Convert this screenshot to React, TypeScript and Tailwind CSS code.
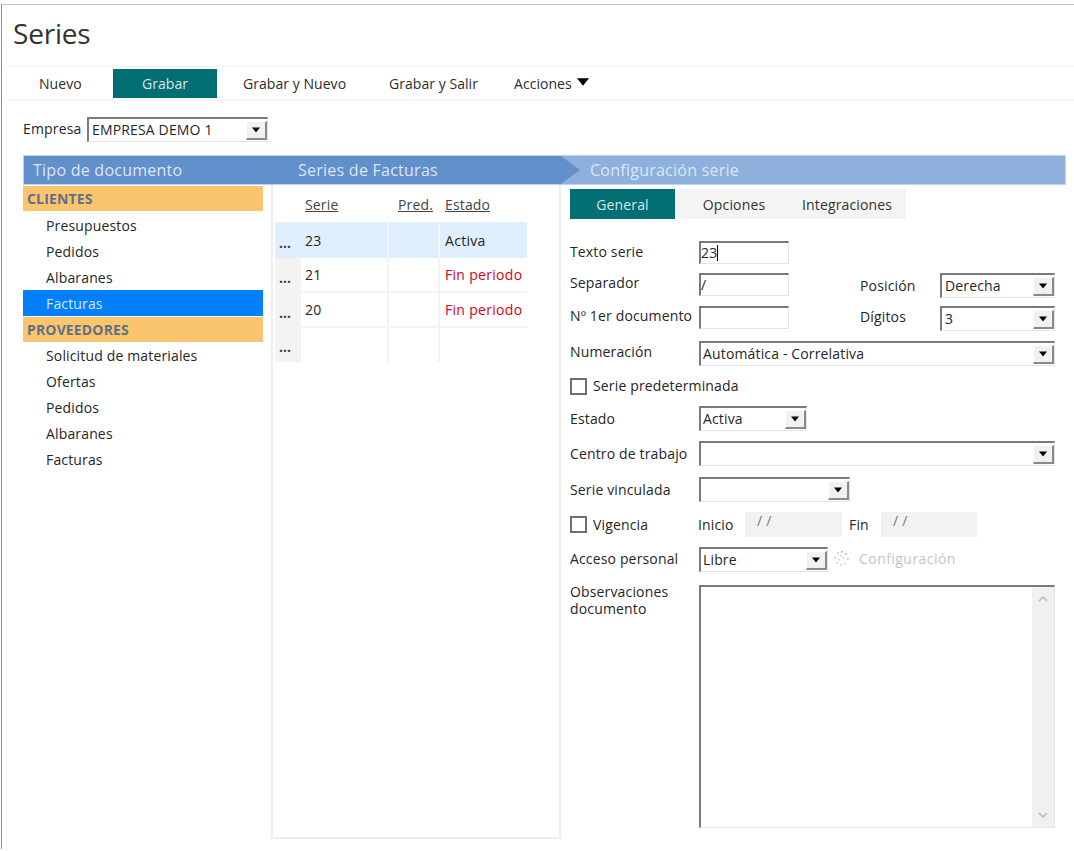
const inset = "border-t-2 border-l-2 border-t-[#7a7a7a] border-l-[#7a7a7a] border-r border-b border-r-[#e4e4e4] border-b-[#e4e4e4] bg-white";

function Arrow() {
  return (
    <svg width="8" height="6" viewBox="0 0 8 6" className="block">
      <path d="M0 0.5H8L4 5.5Z" fill="#000" />
    </svg>
  );
}

function Select({ value, className, tight }: { value?: string; className: string; tight?: boolean }) {
  return (
    <div className={`${inset} flex items-center justify-between h-[25px] border-r-[#9a9a9a] border-b-[#dcdcdc] ${className}`}>
      <span className={`${tight ? "pl-[2px]" : "pl-[3px]"} leading-none`}>{value}</span>
      <span className="w-[21px] h-[19px] bg-[#f1f1f1] flex items-center justify-center border-r-2 border-b-2 border-r-[#8a8a8a] border-b-[#8a8a8a] border-t border-l border-t-white border-l-white">
        <Arrow />
      </span>
    </div>
  );
}

function TextBox({ value, caret }: { value?: string; caret?: boolean }) {
  return (
    <div className={`${inset} w-[90px] h-[23px] flex items-center leading-none`}>
      {value}
      {caret && <span className="w-px h-[16px] bg-black" />}
    </div>
  );
}

function Check() {
  return <span className="block w-[17px] h-[17px] border-2 border-[#6f6f6f] bg-white shrink-0" />;
}

function Label({ children, className = "" }: { children: React.ReactNode; className?: string }) {
  return <span className={`w-[129px] shrink-0 whitespace-nowrap ${className}`}>{children}</span>;
}

function Spinner() {
  const dots = [
    [9, 2, "#8fb0de"], [13, 4, "#b5b5b5"], [15, 9, "#9fb8dc"], [12, 14, "#cfcfcf"],
    [8, 15, "#b4cbea"], [4, 13, "#c9c9c9"], [2, 8, "#a6c1e6"], [5, 3, "#c4c4c4"],
    [8, 6, "#c8c8c8"], [11, 8, "#b9cde8"], [6, 10, "#cfcfcf"],
  ] as const;
  return (
    <svg width="18" height="18" viewBox="0 0 18 18" className="shrink-0">
      {dots.map(([x, y, c], i) => (
        <rect key={i} x={x} y={y} width="1.6" height="1.6" fill={c} />
      ))}
    </svg>
  );
}

const clientes = ["Presupuestos", "Pedidos", "Albaranes", "Facturas"];
const proveedores = ["Solicitud de materiales", "Ofertas", "Pedidos", "Albaranes", "Facturas"];

const rows = [
  { serie: "23", estado: "Activa", h: "h-[36px]", sel: true },
  { serie: "21", estado: "Fin periodo", h: "h-[35px]", red: true, line: true },
  { serie: "20", estado: "Fin periodo", h: "h-[35px]", red: true, line: true },
  { serie: "", estado: "", h: "h-[34px]" },
];

function Row({ r }: { r: (typeof rows)[number] }) {
  const cell = `flex items-center h-full border-r-2 ${r.sel ? "border-r-[#eef6fe]" : "border-r-[#f4f4f4]"}`;
  return (
    <div className={`flex ${r.h} ${r.sel ? "bg-[#e0effd]" : ""}`}>
      <div className={`w-[26px] h-full flex items-end pl-[4px] pb-[7px] leading-[16px] font-bold text-[14px] tracking-normal text-[#4a3a40] ${r.sel ? "" : "bg-[#f3f3f3]"}`}>...</div>
      <div className={`${cell} w-[88px] pl-[4px] ${r.line ? "border-b-2 border-b-[#f5f5f5]" : ""}`}>{r.serie}</div>
      <div className={`${cell} w-[51px] ${r.line ? "border-b-2 border-b-[#f5f5f5]" : ""}`} />
      <div className={`flex-1 flex items-center pl-[5px] whitespace-nowrap tracking-[0.3px] ${r.red ? "text-[#d8001c]" : ""} ${r.line ? "border-b-2 border-b-[#f5f5f5]" : ""}`}>{r.estado}</div>
    </div>
  );
}

export default function App() {
  return (
    <div className="w-[1074px] h-[851px] overflow-hidden bg-white pt-[4px] pl-px text-[14px] text-[#262626] font-['Open_Sans','Noto_Sans',sans-serif] tracking-[0.15px]">
      <div className="h-[845px] border-t border-l border-t-[#c4c4c4] border-l-[#8f8f8f]">
        <div className="h-[60px] pl-[11px] pt-[9px] text-[28px] leading-[38px] tracking-[-0.2px] text-[#333]">Series</div>

        <div className="ml-[5px] h-[36px] border-y-2 border-[#f6f6f6] flex items-center text-[#2c2c2c] tracking-[0.05px]">
          <div className="w-[106px] pl-[32px]">Nuevo</div>
          <div className="w-[104px] h-[29px] bg-[#016e73] text-[#d9e6e6] flex items-center justify-center">Grabar</div>
          <div className="w-[172px] pl-[26px]">Grabar y Nuevo</div>
          <div className="w-[125px]">Grabar y Salir</div>
          <div className="flex items-center gap-[6px]">Acciones <span className="mb-[3px] scale-150 ml-[1px]"><Arrow /></span></div>
        </div>

        <div className="flex items-center pl-[21px] mt-[16px] h-[25px]">
          <span className="w-[64px] -mt-[2px]">Empresa</span>
          <Select value="EMPRESA DEMO 1" className="w-[181px]" />
        </div>

        <div className="flex ml-[21px] mt-[13px] w-[1043px] h-[30px] border border-[#bcd4f0] text-[16px] text-[#dbe6f5] tracking-[0.25px] bg-[#8fafdd]">
          <div className="w-[537px] bg-[#6290cb] flex items-center">
            <span className="w-[274px] pl-[9px]">Tipo de documento</span>
            <span>Series de Facturas</span>
          </div>
          <svg width="20" height="28" viewBox="0 0 20 28" className="shrink-0 block">
            <path d="M0 0L19 14L0 28Z" fill="#6290cb" />
          </svg>
          <div className="flex items-center pl-[9px]">Configuración serie</div>
        </div>

        <div className="flex ml-[21px]">
          <div className="w-[240px] shrink-0 mt-[1px]">
            <div className="h-[25px] bg-[#fbc56e] flex items-center pl-[4px] font-bold text-[#5f6f8a] border-b border-[#fbc56e]">CLIENTES</div>
            <div className="pt-[1px]">
              {clientes.map((c) => (
                <div key={c} className={`h-[26px] flex items-center pl-[23px] ${c === "Facturas" ? "bg-[#007fff] text-[#d5e9ff]" : ""}`}>{c}</div>
              ))}
            </div>
            <div className="h-[25px] mt-[1px] bg-[#fbc56e] flex items-center pl-[4px] font-bold text-[#5f6f8a]">PROVEEDORES</div>
            <div>
              {proveedores.map((c, i) => (
                <div key={i} className="h-[26px] flex items-center pl-[23px]">{c}</div>
              ))}
            </div>
          </div>

          <div className="ml-[8px] w-[290px] h-[654px] shrink-0 border-x-2 border-b-2 border-[#eeeeee] pl-[2px]">
            <div className="h-[37px] pt-[2px] flex items-center underline text-[#444]">
              <span className="ml-[30px] w-[93px]">Serie</span>
              <span className="w-[47px]">Pred.</span>
              <span>Estado</span>
            </div>
            <div className="w-[252px]">
              {rows.map((r, i) => <Row key={i} r={r} />)}
            </div>
          </div>

          <div className="ml-[9px] pt-[4px] flex-1">
            <div className="flex w-[336px] h-[30px] bg-[#f4f4f4] text-[#333]">
              <div className="w-[105px] bg-[#016e73] text-[#d9e6e6] flex items-center justify-center">General</div>
              <div className="w-[118px] flex items-center justify-center">Opciones</div>
              <div className="flex items-center pl-[9px]">Integraciones</div>
            </div>

            <div className="flex items-center h-[23px] mt-[22px]"><Label className="-mt-[2px]">Texto serie</Label><TextBox value="23" caret /></div>

            <div className="flex h-[25px] mt-[9px]">
              <div className="flex items-center h-[23px]"><Label className="-mt-[4px]">Separador</Label><TextBox value="/" /></div>
              <span className="ml-[71px] w-[80px] self-center">Posición</span>
              <Select value="Derecha" className="w-[115px]" />
            </div>

            <div className="flex h-[25px] mt-[8px]">
              <div className="flex items-center h-[23px]"><Label className="-mt-[4px]">Nº 1er documento</Label><TextBox /></div>
              <span className="ml-[71px] w-[80px] self-center -mt-[4px]">Dígitos</span>
              <Select value="3" className="w-[115px]" />
            </div>

            <div className="flex items-center h-[25px] mt-[10px]">
              <Label className="-mt-[4px]">Numeración</Label>
              <Select tight value="Automática - Correlativa" className="w-[356px]" />
            </div>

            <div className="flex items-center gap-[6px] h-[17px] mt-[12px]"><Check /><span className="-mt-[2px]">Serie predeterminada</span></div>

            <div className="flex items-center h-[25px] mt-[11px]"><Label>Estado</Label><Select tight value="Activa" className="w-[108px]" /></div>
            <div className="flex items-center h-[25px] mt-[10px]"><Label>Centro de trabajo</Label><Select className="w-[356px]" /></div>
            <div className="flex items-center h-[25px] mt-[11px]"><Label>Serie vinculada</Label><Select className="w-[151px]" /></div>

            <div className="flex items-center h-[25px] mt-[10px]">
              <div className="w-[128px] shrink-0 flex items-center gap-[6px]"><Check />Vigencia</div>
              <span className="w-[47px]">Inicio</span>
              <div className="w-[97px] h-[25px] bg-[#f2f2f2] pl-[12px] leading-[18px] text-[#777] tracking-[4px]">//</div>
              <span className="ml-[7px] w-[32px]">Fin</span>
              <div className="w-[96px] h-[25px] bg-[#f2f2f2] pl-[12px] leading-[18px] text-[#777] tracking-[4px]">//</div>
            </div>

            <div className="flex items-center h-[25px] mt-[10px]">
              <Label className="-mt-[2px]">Acceso personal</Label>
              <Select tight value="Libre" className="w-[129px]" />
              <span className="ml-[4px] -mt-[4px]"><Spinner /></span>
              <span className="ml-[9px] -mt-[2px] text-[#c4c4c4] tracking-[0.45px]">Configuración</span>
            </div>

            <div className="flex mt-[13px]">
              <Label><span className="block leading-[17px] -mt-[3px] pt-[1px]">Observaciones<br />documento</span></Label>
              <div className="w-[356px] h-[243px] border-t-2 border-l-2 border-b border-r border-[#e8e8e8] border-t-[#7a7a7a] border-l-[#7a7a7a] flex justify-end">
                <div className="w-[22px] bg-[#f0f0f0] flex flex-col items-center justify-between py-[9px]">
                  <svg width="10" height="6" viewBox="0 0 10 6"><path d="M1 5L5 1.2L9 5" fill="none" stroke="#bdbdbd" strokeWidth="1.6" /></svg>
                  <svg width="10" height="6" viewBox="0 0 10 6"><path d="M1 1L5 4.8L9 1" fill="none" stroke="#bdbdbd" strokeWidth="1.6" /></svg>
                </div>
              </div>
            </div>
          </div>
        </div>
      </div>
    </div>
  );
}
